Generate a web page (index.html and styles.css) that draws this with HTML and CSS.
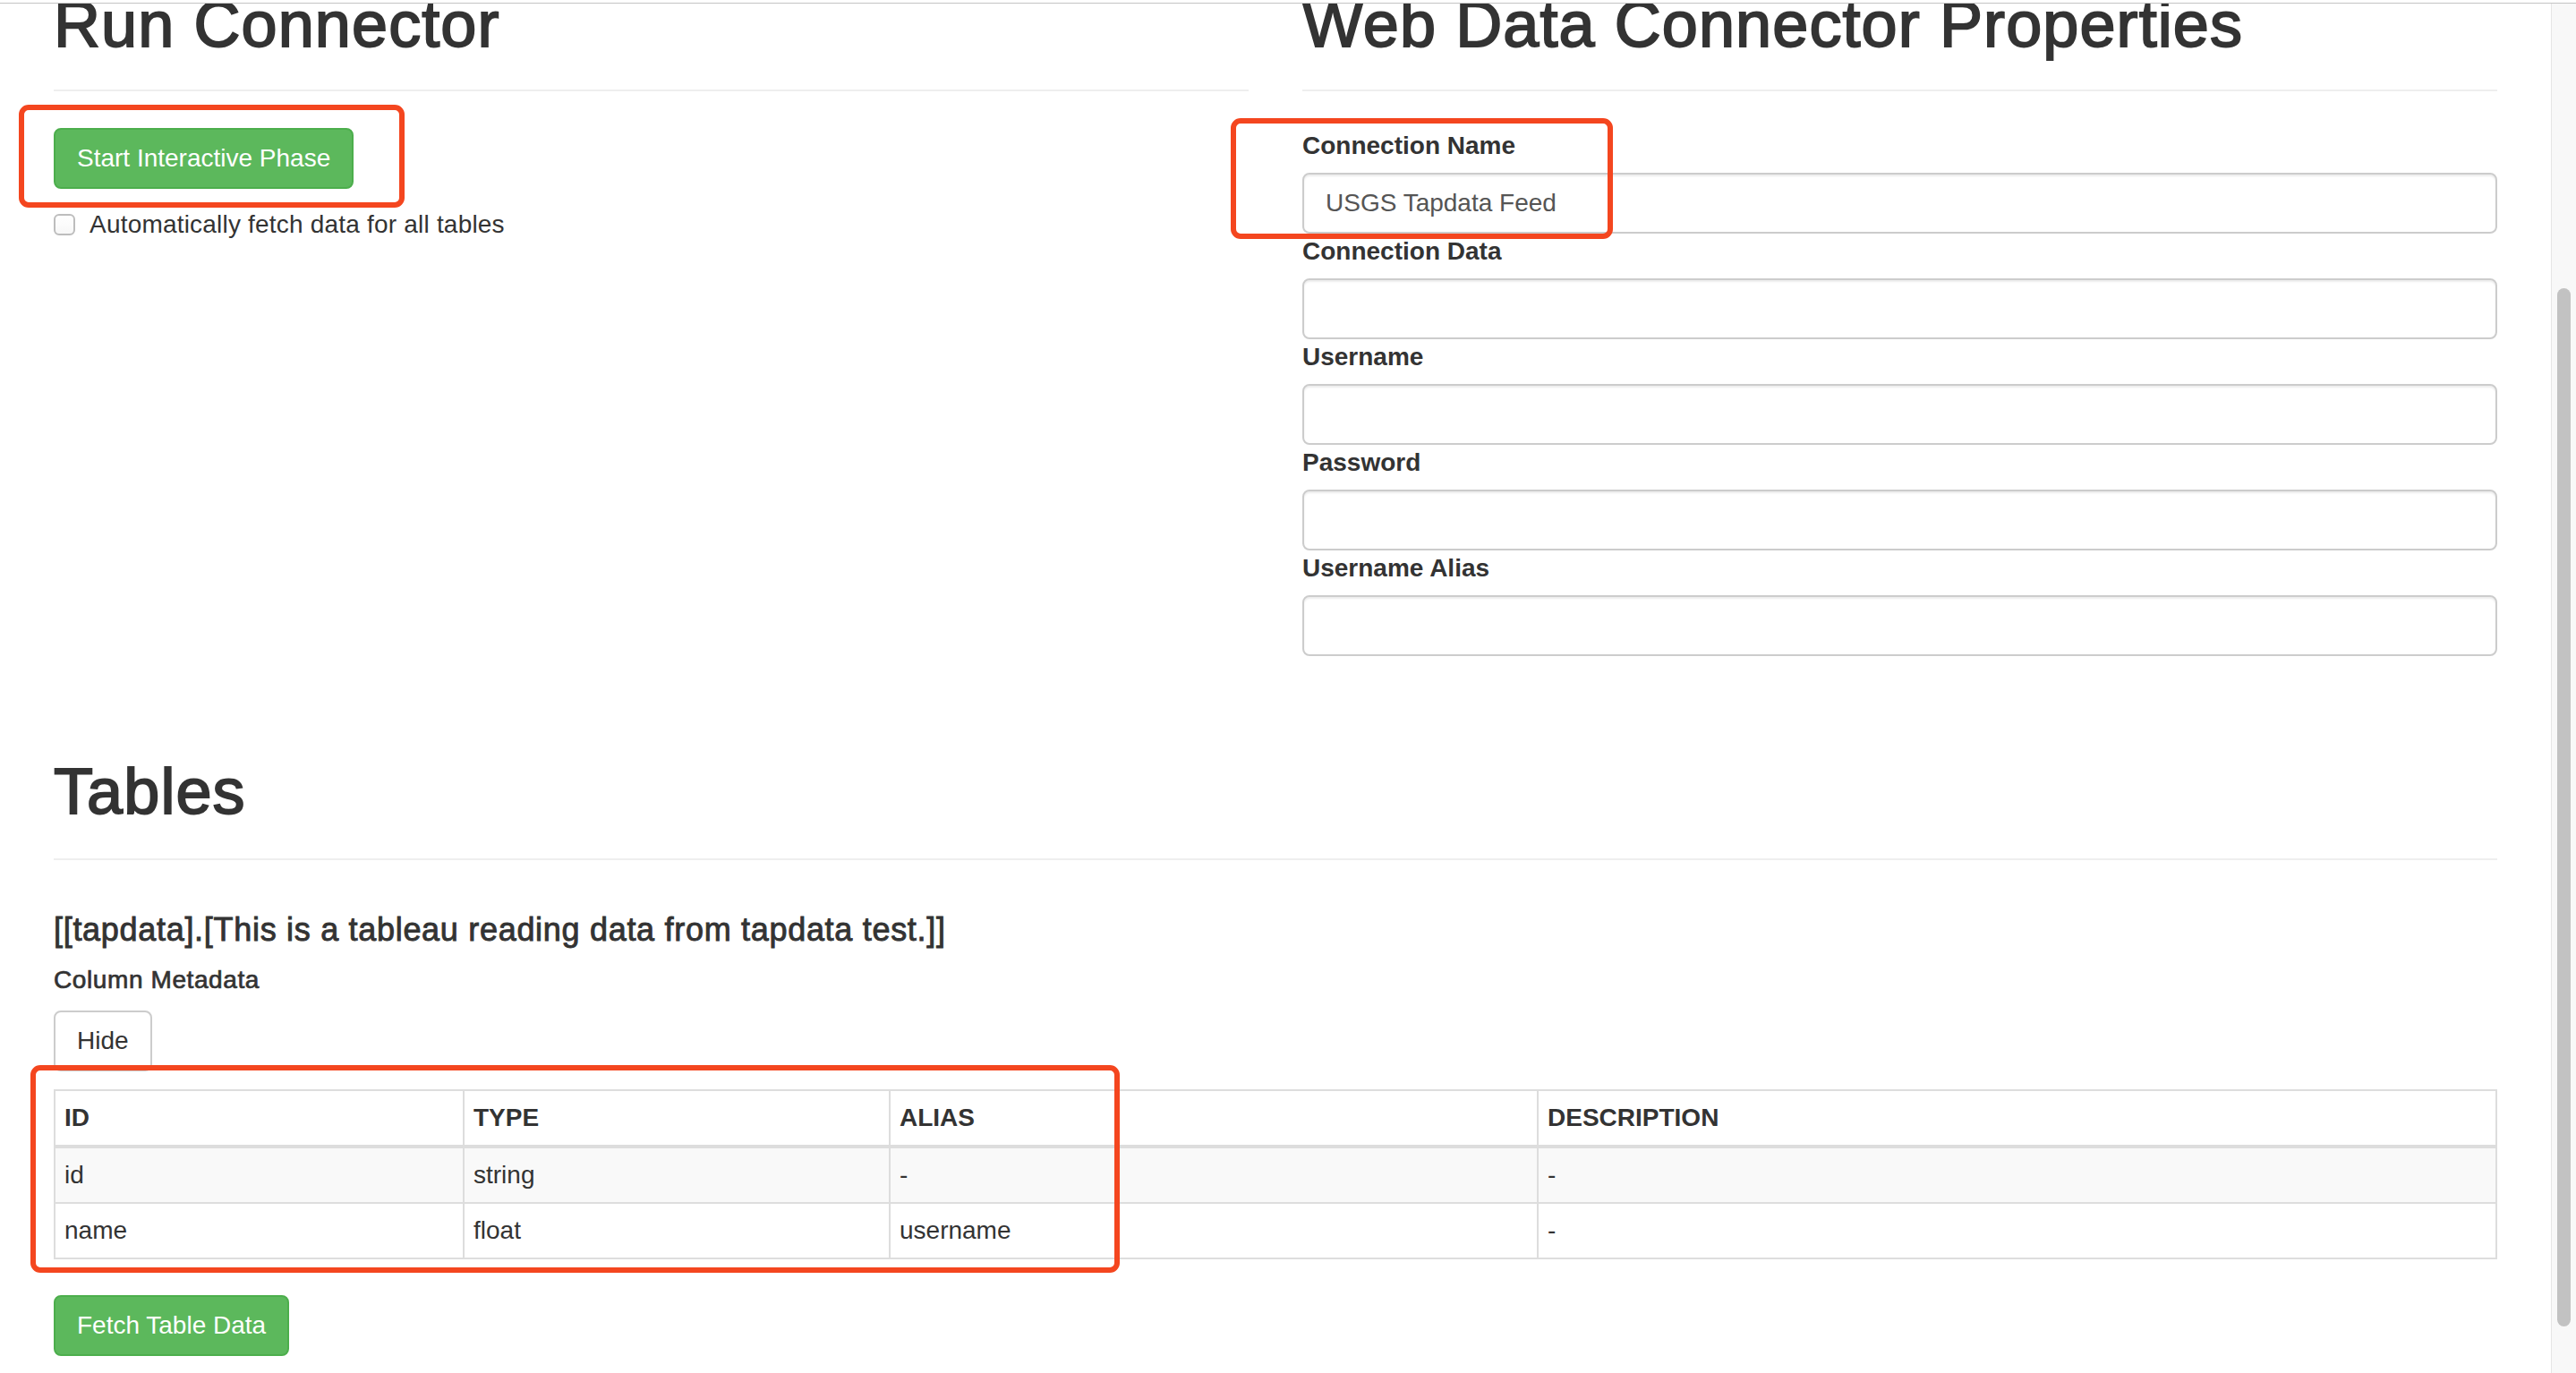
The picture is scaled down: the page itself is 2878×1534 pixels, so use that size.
FILE: index.html
```html
<!DOCTYPE html>
<html lang="en">
<head>
<meta charset="utf-8">
<title>Web Data Connector Simulator</title>
<link rel="stylesheet" href="styles.css">
</head>
<body>
  <div class="chrome-top"></div>
  <div class="window">
    <div class="viewport">
      <div class="page">
        <div class="row">
          <div class="col">
            <div class="page-header"><h1>Run Connector</h1></div>
            <button class="btn btn-success">Start Interactive Phase</button>
            <div class="checkbox">
              <input type="checkbox" class="check">
              <span>Automatically fetch data for all tables</span>
            </div>
          </div>
          <div class="col">
            <div class="page-header"><h1>Web Data Connector Properties</h1></div>
            <form class="props">
              <label class="field-label">Connection Name</label>
              <input class="form-control" type="text" value="USGS Tapdata Feed">
              <label class="field-label">Connection Data</label>
              <input class="form-control" type="text">
              <label class="field-label">Username</label>
              <input class="form-control" type="text">
              <label class="field-label">Password</label>
              <input class="form-control" type="password">
              <label class="field-label">Username Alias</label>
              <input class="form-control" type="text">
            </form>
          </div>
        </div>
        <section class="tables">
          <div class="page-header page-header-tables"><h1>Tables</h1></div>
          <h4 class="table-title">[[tapdata].[This is a tableau reading data from tapdata test.]]</h4>
          <h5 class="meta-title">Column Metadata</h5>
          <button class="btn btn-default">Hide</button>
          <table class="meta-table">
            <thead>
              <tr>
                <th class="c-id">ID</th>
                <th class="c-type">TYPE</th>
                <th class="c-alias">ALIAS</th>
                <th class="c-desc">DESCRIPTION</th>
              </tr>
            </thead>
            <tbody>
              <tr class="striped">
                <td>id</td>
                <td>string</td>
                <td>-</td>
                <td>-</td>
              </tr>
              <tr>
                <td>name</td>
                <td>float</td>
                <td>username</td>
                <td>-</td>
              </tr>
            </tbody>
          </table>
          <button class="btn btn-success btn-fetch">Fetch Table Data</button>
        </section>
      </div>
    </div>
    <div class="scrollbar"><div class="thumb"></div></div>
  </div>
  <div class="mark mark-1"></div>
  <div class="mark mark-2"></div>
  <div class="mark mark-3"></div>
</body>
</html>
```
FILE: styles.css
```css
* { box-sizing: border-box; }

html, body {
  margin: 0;
  padding: 0;
  height: 1534px;
  overflow: hidden;
  background: #fff;
}

body {
  position: relative;
  font-family: "Liberation Sans", Arial, Helvetica, sans-serif;
  font-size: 28px;
  line-height: 40px;
  color: #333;
  letter-spacing: 0.2px;
}

.chrome-top {
  height: 4px;
  border-bottom: 1px solid #c4c4c4;
  background: #fff;
}

.window {
  display: flex;
  height: 1530px;
}

.viewport {
  flex: 1;
  overflow: hidden;
  padding: 0 30px;
}

/* page is scrolled slightly: headings clipped at the top edge */
.page {
  margin-top: -17px;
}

.row {
  display: flex;
}

.col {
  flex: 1 1 0;
  padding: 0 30px;
  min-width: 0;
}

.page-header {
  padding-bottom: 33px;
  border-bottom: 2px solid #eee;
  margin-bottom: 41px;
}

h1 {
  margin: 0;
  font-size: 72px;
  line-height: 80px;
  font-weight: 400;
  color: #333;
  letter-spacing: 1.1px;
  -webkit-text-stroke: 1.9px #333;
  white-space: nowrap;
}

.btn {
  display: inline-block;
  height: 68px;
  padding: 12px 24px;
  font-family: inherit;
  font-size: 28px;
  line-height: 40px;
  letter-spacing: 0;
  border: 2px solid transparent;
  border-radius: 8px;
  cursor: pointer;
  vertical-align: top;
}

.btn-success {
  background: #5cb85c;
  border-color: #4cae4c;
  color: #fff;
}

.btn-default {
  background: #fff;
  border-color: #ccc;
  color: #333;
}

.checkbox {
  display: flex;
  align-items: flex-start;
  gap: 16px;
  margin-top: 20px;
}

.check {
  appearance: none;
  -webkit-appearance: none;
  width: 24px;
  height: 24px;
  margin: 8px 0 0 0;
  border: 2px solid #bdbdbd;
  border-radius: 6px;
  background: linear-gradient(#fff, #f7f7f7);
  flex: none;
}

.props {
  display: flex;
  flex-direction: column;
}

.field-label {
  display: block;
  font-weight: 700;
  font-size: 28px;
  line-height: 40px;
  margin-bottom: 10px;
  letter-spacing: 0;
}

.form-control {
  display: block;
  width: 100%;
  height: 68px;
  padding: 12px 24px;
  font-family: inherit;
  font-size: 28px;
  line-height: 40px;
  color: #555;
  background: #fff;
  border: 2px solid #ccc;
  border-radius: 8px;
  box-shadow: inset 0 2px 2px rgba(0, 0, 0, 0.075);
  margin: 0;
  letter-spacing: 0;
}

.tables {
  padding: 0 30px;
}

.page-header-tables {
  margin-top: 111px;
  padding-bottom: 35px;
  margin-bottom: 58px;
}

.table-title {
  margin: 0;
  font-size: 36px;
  line-height: 40px;
  font-weight: 400;
  letter-spacing: 0.7px;
  -webkit-text-stroke: 0.9px #333;
  white-space: nowrap;
}

.meta-title {
  margin: 16px 0 0 0;
  font-size: 28px;
  line-height: 40px;
  font-weight: 400;
  letter-spacing: 0.6px;
  -webkit-text-stroke: 0.7px #333;
}

.meta-title + .btn {
  margin-top: 14px;
}

.meta-table {
  margin-top: 20px;
  width: 100%;
  table-layout: fixed;
  border-collapse: separate;
  border-spacing: 0;
  border-top: 2px solid #ddd;
  border-left: 2px solid #ddd;
}

.meta-table th,
.meta-table td {
  box-sizing: border-box;
  padding: 10px;
  line-height: 40px;
  font-size: 28px;
  text-align: left;
  border-right: 2px solid #ddd;
  border-bottom: 2px solid #ddd;
  white-space: nowrap;
  overflow: hidden;
  letter-spacing: 0;
}

.meta-table th {
  font-weight: 700;
}

.meta-table thead th {
  border-bottom-width: 4px;
}

.c-id { width: 457px; }
.c-type { width: 476px; }
.c-alias { width: 724px; }

.striped td {
  background: #f9f9f9;
}

.btn-fetch {
  margin-top: 40px;
}

.scrollbar {
  width: 28px;
  flex: none;
  background: #f8f8f8;
  border-left: 1px solid #e6e6e6;
  padding-top: 318px;
  display: flex;
  justify-content: center;
}

.thumb {
  width: 15px;
  height: 1160px;
  background: #c2c2c2;
  border-radius: 8px;
}

.mark {
  position: absolute;
  border: 6px solid #f4461f;
  border-radius: 11px;
  pointer-events: none;
}

.mark-1 { left: 21px; top: 117px; width: 431px; height: 115px; }
.mark-2 { left: 1375px; top: 132px; width: 427px; height: 135px; }
.mark-3 { left: 34px; top: 1190px; width: 1217px; height: 232px; }
```
